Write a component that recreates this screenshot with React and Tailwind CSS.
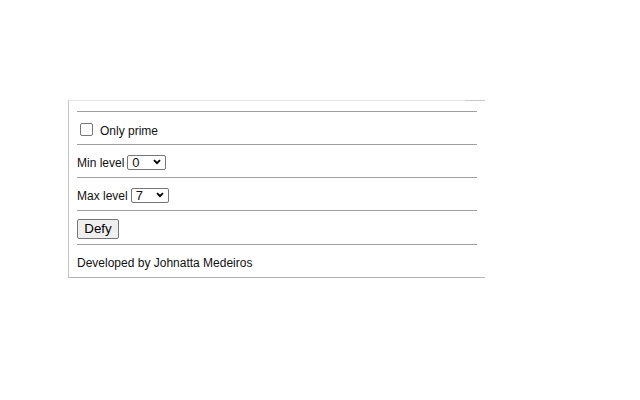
import React from "react";

function Chevron() {
  return (
    <svg width="8" height="6" viewBox="0 0 8 6" className="shrink-0">
      <path d="M1 1.2 L4 4.2 L7 1.2" fill="none" stroke="#000" strokeWidth="1.9" />
    </svg>
  );
}

function Select({ value, w }) {
  return (
    <div
      className={`flex items-center justify-between h-[15px] ${w} mt-[2px] border border-[#767676] rounded-[2px] bg-white pl-[4px] pr-[4px] text-[13px] leading-none font-['Liberation_Sans',sans-serif]`}
    >
      <span className="pt-[1px]">{value}</span>
      <Chevron />
    </div>
  );
}

function Rule() {
  return <div className="h-px bg-[#a0a0a0]" />;
}

export default function App() {
  return (
    <div className="w-[640px] h-[400px] bg-white pt-[100px] pl-[68px] font-['Liberation_Sans',sans-serif] text-[12px] text-[#111]">
      <div className="w-[417px] h-[178px] border-t border-l border-b border-t-[#e6e6e6] border-l-[#c4c4c4] border-b-[#b4b4b4] pl-[8px] pr-[8px] relative">
        <div className="absolute top-[-1px] right-0 w-[20px] h-px bg-[#c8c8c8]" />
        <div className="h-[10px]" />
        <Rule />
        <div className="h-[32px] flex items-center pl-[3px] gap-[7px]">
          <div className="w-[13px] h-[13px] border border-[#767676] rounded-[2px] bg-white mt-[2px]" />
          <span className="pt-[5px]">Only prime</span>
        </div>
        <Rule />
        <div className="h-[32px] flex items-center gap-[3px]">
          <span className="pt-[4px]">Min level</span>
          <Select value="0" w="w-[39px]" />
        </div>
        <Rule />
        <div className="h-[32px] flex items-center gap-[3px]">
          <span className="pt-[4px]">Max level</span>
          <Select value="7" w="w-[38px]" />
        </div>
        <Rule />
        <div className="h-[33px] flex items-center">
          <div className="w-[42px] h-[20px] mt-[2px] border border-[#767676] rounded-[2px] bg-[#efefef] flex items-center justify-center text-[13.33px] text-black">
            Defy
          </div>
        </div>
        <Rule />
        <div className="h-[32px] flex items-center">
          <span className="pt-[4px]">Developed by Johnatta Medeiros</span>
        </div>
      </div>
    </div>
  );
}
